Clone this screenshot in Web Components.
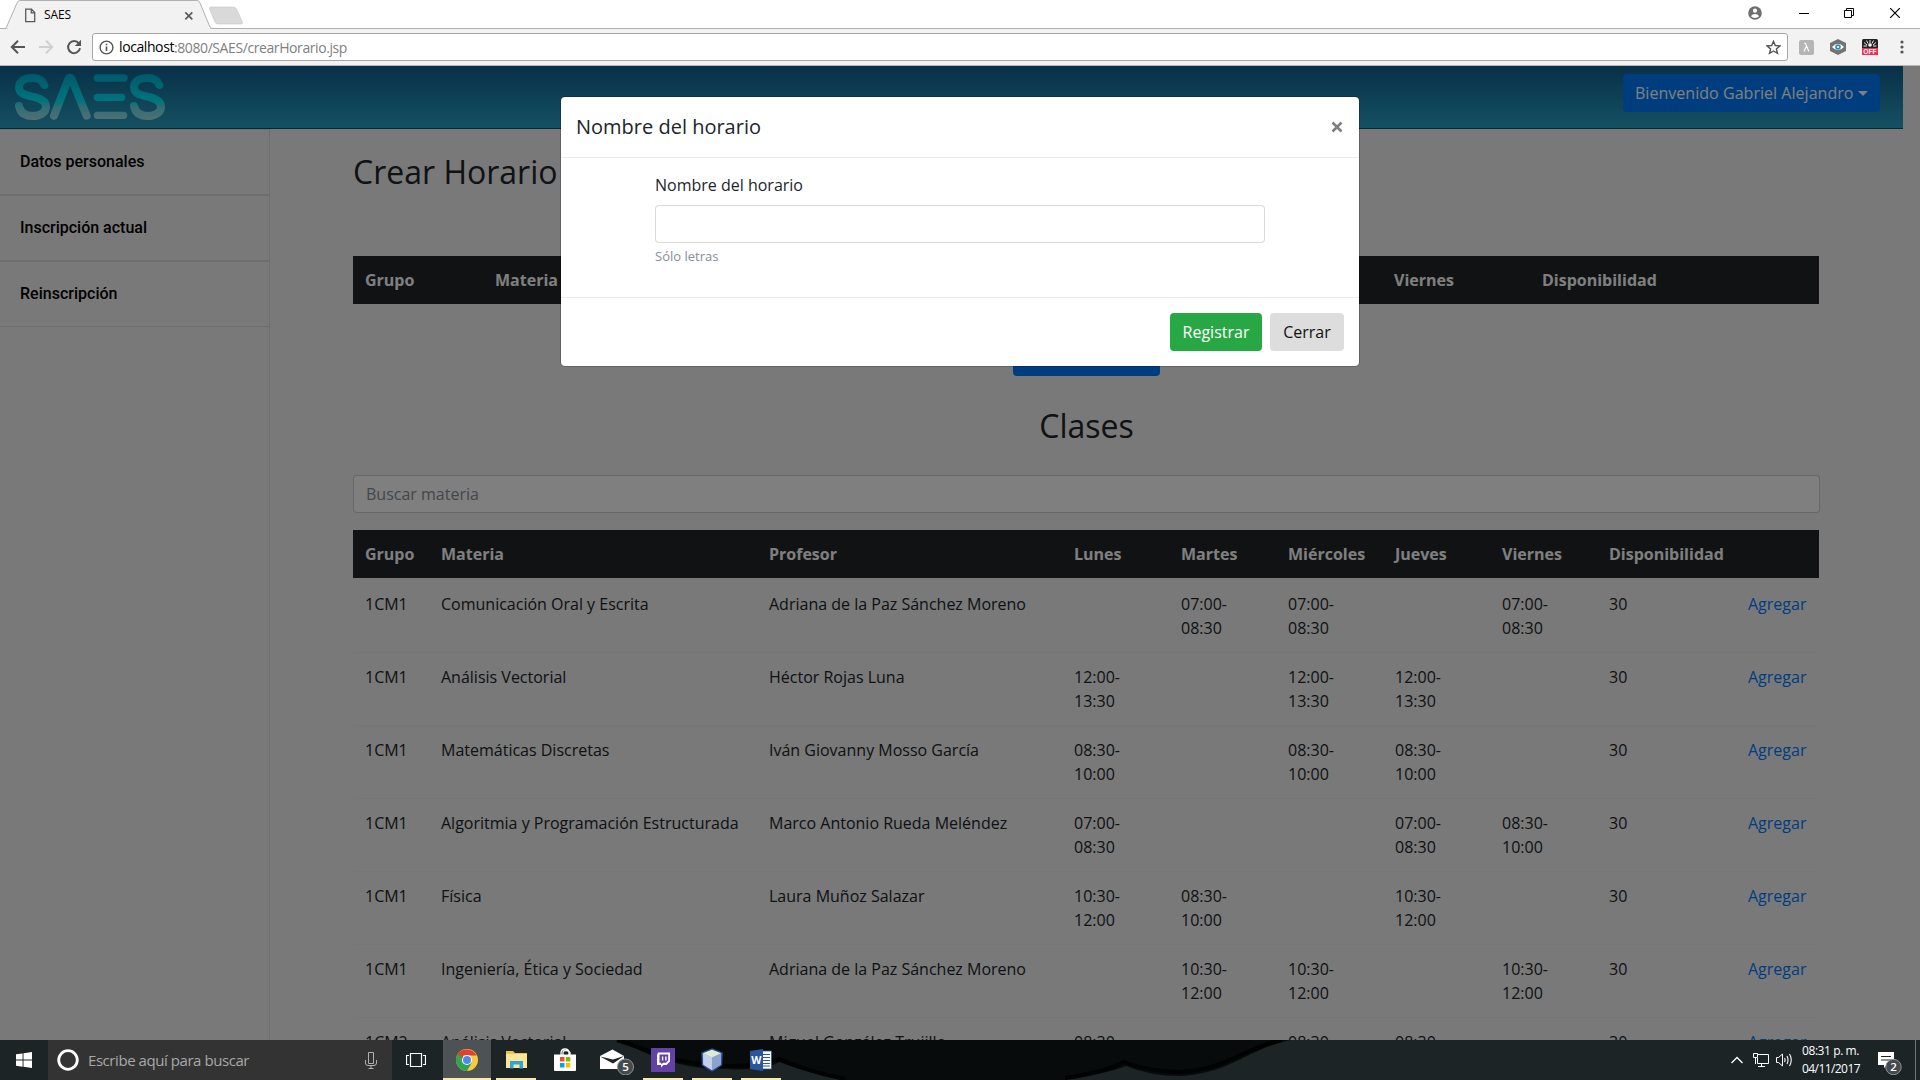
<!DOCTYPE html>
<html lang="es">
<head>
<meta charset="utf-8">
<title>SAES</title>
<style>
html,body{margin:0;padding:0;width:1920px;height:1080px;overflow:hidden;background:#fff}
body{display:flex;flex-direction:column;font-family:"Open Sans",sans-serif;font-size:16px;line-height:24px;color:#212529}
</style>
</head>
<body>
<browser-chrome url-host="localhost" url-path=":8080/SAES/crearHorario.jsp">SAES</browser-chrome>
<saes-page></saes-page>
<win-taskbar></win-taskbar>
<script>
function define(name, html, after){
  const t=document.createElement('template');
  t.innerHTML='<style>*{box-sizing:border-box}svg{display:block}</style>'+html;
  customElements.define(name, class extends HTMLElement{
    connectedCallback(){
      if(this.shadowRoot) return;
      this.attachShadow({mode:'open'}).appendChild(t.content.cloneNode(true));
      if(after) after(this,this.shadowRoot);
    }
  });
}

/* Text whose letter-spacing is tuned so the run has the width given in "w". */
define('fit-text','<style>:host{display:inline-block;white-space:pre}</style><span><slot></slot></span>',(el,root)=>{
  const s=root.querySelector('span'), w=parseFloat(el.getAttribute('w')), n=el.textContent.length;
  const fit=()=>{s.style.letterSpacing='0px';const d=(w-s.getBoundingClientRect().width)/n;s.style.letterSpacing=d+'px'};
  fit();
});

define('browser-chrome',`<style>
:host{display:flex;flex-direction:column;height:66px;flex:none;background:#fff;font-family:"Open Sans",sans-serif;color:#000}
.strip{height:29px;display:flex;justify-content:space-between;position:relative;border-bottom:1px solid #b0b0b0}
.tabbg{position:absolute;left:0;top:0}
.tab{display:flex;align-items:center;padding-left:24px;position:relative;height:29px;width:220px}
.tab fit-text{font-size:12px;line-height:16px;margin-left:8px;width:140px}
.win{display:flex;align-items:center;padding:0 20px 3px 0}
.bar{flex:1;background:#f2f2f2;display:flex;align-items:center;border-bottom:1px solid #b6b6b6;padding:0 15px 0 10px}
.url{margin-left:10px;width:1696px;height:28px;border:1px solid #a6a6a6;border-radius:3px;background:#fff;display:flex;align-items:center;padding:0 6px 0 6px}
.url fit-text{font-size:14px;line-height:20px}
.path{color:#808080;flex:1}
</style>
<div class="strip">
<svg class="tabbg" width="250" height="29"><path d="M0 28.5H5Q6.500 28 7 26L17 3Q18 .5 20 .5H197Q199 .5 200 3L209.500 26Q210.500 28.500 212 28.500" fill="#f2f2f2" stroke="#b0b0b0"/><path d="M8 28.500H210" stroke="#f2f2f2"/><path d="M210.500 7H233Q235.500 7 236.500 9L242.500 22Q243 24 241 24H218Q216 24 215 22L209.500 9Q209 7 210.500 7Z" fill="#d9d9d9" stroke="#c8c8c8" stroke-width=".6"/></svg>
<div class="tab"><svg width="12" height="15" viewBox="0 0 12 15" style="margin-top:1px"><path d="M1.700 1.200H7.500L10.700 4.500V13.600H1.700ZM7.300 1.200V4.800H10.700" fill="none" stroke="#5a5a5a" stroke-width="1.300"/></svg><fit-text w="27"><slot></slot></fit-text>
<svg width="10" height="10" viewBox="0 0 10 10" style="margin:2px 0 0 0"><path d="M1.300 1.300l7 7M8.300 1.300l-7 7" stroke="#5a5a5a" stroke-width="1.700"/></svg></div>
<div class="win">
<svg width="14" height="14" viewBox="0 0 14 14" style="margin-right:37px"><circle cx="7" cy="7" r="6.800" fill="#6e6e6e"/><circle cx="7" cy="4.700" r="2.100" fill="#fff"/><path d="M2.900 10.200Q4.300 8 7 8T11.100 10.200Q9.500 12 7 12T2.900 10.200Z" fill="#fff"/></svg>
<svg width="10" height="10" style="margin-right:35px"><path d="M0 5.500H10" stroke="#000"/></svg>
<svg width="10" height="10" style="margin-right:36px"><path d="M.5 2.500H7.500V9.500H.5ZM2.500 2.500V.5H9.500V7.500H7.500" fill="none" stroke="#000"/></svg>
<svg width="10" height="10"><path d="M0 0L10 10M10 0L0 10" stroke="#000" stroke-width="1.200"/></svg>
</div></div>
<div class="bar">
<svg width="16" height="16" viewBox="0 0 16 16"><path d="M15 8H2M8 1.800L1.800 8L8 14.200" fill="none" stroke="#555" stroke-width="2"/></svg>
<svg width="16" height="16" viewBox="0 0 16 16" style="margin-left:12px"><path d="M1 8H14M8 1.800L14.200 8L8 14.200" fill="none" stroke="#d0d0d0" stroke-width="2"/></svg>
<svg width="16" height="16" viewBox="0 0 16 16" style="margin-left:12px"><path d="M12.900 4.500A6 6 0 1 0 14 9.300" fill="none" stroke="#555" stroke-width="2"/><path d="M15 .8V7H8.800Z" fill="#555"/></svg>
<div class="url">
<svg width="15" height="15" viewBox="0 0 15 15" style="margin-right:5px"><circle cx="7.500" cy="7.500" r="6.400" fill="none" stroke="#555" stroke-width="1.400"/><path d="M7.500 6.500V11M7.500 3.800V5.300" stroke="#555" stroke-width="1.600"/></svg>
<fit-text class="host" w="55"></fit-text><div class="path"><fit-text w="173"></fit-text></div>
<svg width="15" height="15" viewBox="0 0 15 15"><path d="M7.500 1.300L9.300 5.500L13.900 5.900L10.400 8.900L11.500 13.400L7.500 11L3.500 13.400L4.600 8.900L1.100 5.900L5.700 5.500Z" fill="none" stroke="#555" stroke-width="1.400"/></svg></div>
<svg width="15" height="15" viewBox="0 0 15 15" style="margin-left:11px"><rect width="15" height="15" rx="2" fill="#b5b5b5"/><path d="M5.300 3.500Q6.500 3 7 4.500L9.800 11.500M7.200 6.500L5 11.500" stroke="#fff" fill="none" stroke-width="1.100"/></svg>
<svg width="18" height="18" viewBox="0 0 18 18" style="margin-left:15px"><path d="M9 1L17 5V13L9 17L1 13V5Z" fill="#737373"/><path d="M3 9Q9 2.500 15 9Q9 15.500 3 9Z" fill="#fff"/><circle cx="9" cy="9" r="2.800" fill="#2c8fb5"/><circle cx="9" cy="9" r="1.100" fill="#fff"/></svg>
<svg width="16" height="16" viewBox="0 0 16 16" style="margin-left:15px"><rect width="16" height="16" rx="1.500" fill="#222"/><path d="M0 9H16V14.500Q16 16 14.500 16H1.500Q0 16 0 14.500Z" fill="#ef2d56"/><path d="M8 1V4M4.500 1.500L6 4.500M11.500 1.500L10 4.500M2 3.500L5 6M14 3.500L11 6M1.500 7H5M11 7H14.500" stroke="#fff" stroke-width=".9"/><circle cx="8" cy="6" r="1.800" fill="#fff"/><text x="8" y="15.100" font-family="Liberation Sans" font-weight="bold" font-size="6.700" fill="#fff" text-anchor="middle">OFF</text></svg>
<svg width="4" height="14" viewBox="0 0 4 14" style="margin-left:22px"><circle cx="2" cy="2" r="1.600" fill="#555"/><circle cx="2" cy="7" r="1.600" fill="#555"/><circle cx="2" cy="12" r="1.600" fill="#555"/></svg>
</div>`,(el,r)=>{
  const f=r.querySelectorAll('.url fit-text');
  f[0].textContent=el.getAttribute('url-host');
  f[1].textContent=el.getAttribute('url-path');
  /* the slotted and attribute texts arrive late, so spacing is set again */
  const set=(e,n)=>{const s=e.shadowRoot.querySelector('span');s.style.letterSpacing='0px';s.style.letterSpacing=((+e.getAttribute('w')-s.getBoundingClientRect().width)/n)+'px'};
  set(f[0],9);set(f[1],f[1].textContent.length);
  set(r.querySelector('.tab fit-text'),4);
});

define('saes-logo',`<style>:host{display:block;width:152px;height:48px}</style>
<svg width="152" height="48" viewBox="42 219 456 144"><defs><linearGradient id="g" gradientUnits="userSpaceOnUse" x1="0" y1="222" x2="0" y2="360"><stop offset="0" stop-color="#00b2d0"/><stop offset=".58" stop-color="#00e8fa"/><stop offset=".72" stop-color="#60dce8"/><stop offset="1" stop-color="#a4e0e8"/></linearGradient></defs>
<g fill="none" stroke="url(#g)" stroke-width="24" stroke-linecap="round" stroke-linejoin="round"><path d="M133 255C128 241 115 234 97 234C72 234 57 245 57 262C57 281 76 285 98 290C121 295 138 302 138 320C138 338 120 348 98 348C76 348 61 338 57 318"/><path d="M162 347L204 240Q210 227 216 240L260 347"/><path d="M478 255C473 241 460 234 442 234C417 234 402 245 402 262C402 281 421 285 443 290C466 295 483 302 483 320C483 338 465 348 443 348C421 348 406 338 402 318"/><g stroke-width="22"><path d="M292 234.010L372 234M292 292.010L365 292M292 346.010L371 346"/></g></g></svg>`);

define('saes-header',`<style>
:host{display:flex;justify-content:space-between;height:63px;width:1903px;flex:none;background:linear-gradient(#10608f,#2aa2c4);border-bottom:1px solid #045080;padding:7px 23px 0 14px}
.btn{width:257px;height:38px;background:#007bff;border-radius:4px;color:#fff;display:flex;align-items:center;padding:0 12px;margin-top:1px}
i{border:5px solid transparent;border-top-color:#fff;border-bottom:0;margin-left:4px}
</style><saes-logo></saes-logo><div class="btn"><fit-text w="218.500">Bienvenido Gabriel Alejandro</fit-text><i></i></div>`);

define('nav-item',`<style>
:host{display:flex;align-items:center;height:66px;border:solid #dcdcdc;border-width:1px 0;padding:0 20px;font-family:Roboto,sans-serif;font-weight:500;font-size:16px;color:#000}
</style><fit-text><slot></slot></fit-text>`,(el,r)=>{
  const s=r.querySelector('fit-text').shadowRoot.querySelector('span');
  s.style.letterSpacing='0px';
  s.style.letterSpacing=((+el.getAttribute('w')-s.getBoundingClientRect().width)/el.textContent.length)+'px';
});

define('side-nav',`<style>:host{display:block;width:270px;flex:none;border-right:1px solid #dcdcdc}</style><slot></slot>`);

/* cols: column widths; rows are "|" separated, times written start-end */
define('class-table',`<style>
:host{display:block;width:1466px}
.r{display:grid;border-top:1px solid #eaeded}
.r.h{background:#212529;color:#fff;font-weight:700;border:0}
.c{padding:12px;white-space:pre-line;min-width:0}
.h .c{white-space:nowrap}
.gap{height:1px}
.a{color:#007bff}
</style><div id="t"></div>`,(el,r)=>{
  const t=r.getElementById('t'),cols=el.getAttribute('cols');
  const row=(txt,head)=>{
    const d=document.createElement('div');d.className='r'+(head?' h':'');d.style.gridTemplateColumns=cols;
    txt.split('|').forEach(x=>{const c=document.createElement('div');c.className='c'+(x==='Agregar'?' a':'');c.textContent=x.replace(/^(\d\d:\d\d-)/,'$1\n');d.appendChild(c)});
    t.appendChild(d);
  };
  row(el.getAttribute('head'),true);
  const g=document.createElement('div');g.className='gap';t.appendChild(g);
  (el.getAttribute('rows')||'').split(';').filter(Boolean).forEach(x=>row(x));
});

define('text-field',`<style>
:host{display:flex;align-items:center;height:38px;border:1px solid rgba(0,0,0,.15);border-radius:4px;background:#fff;background-clip:padding-box;padding:0 12px;color:#868e96}
</style><slot></slot>`);

define('name-modal',`<style>
:host{position:absolute;inset:0;background:rgba(0,0,0,.5);display:flex;justify-content:center;align-items:flex-start;padding:30px 0 0}
.m{width:800px;border:1px solid rgba(0,0,0,.2);border-radius:5px;background:#fff;background-clip:padding-box}
.hd{display:flex;justify-content:space-between;height:61px;padding:15px;border-bottom:1px solid #e9ecef;font-size:20px;line-height:30px}
.hd svg{margin:9px 1px 0 0}
.bd{padding:15px 94px 0;height:139px}
.bd text-field{margin-top:8px}
.bd small{display:block;font-size:13px;line-height:18px;margin-top:4px;color:#868e96}
.ft{border-top:1px solid #e9ecef;display:flex;justify-content:flex-end;gap:8px;padding:15px}
.b{height:38px;border-radius:4px;display:flex;align-items:center;justify-content:center;background:#28a745;color:#fff;width:92px}
.g{background:#ddd;color:#111;width:74px}
</style><div class="m"><div class="hd"><span>Nombre del horario</span><svg width="12" height="12"><path d="M1.500 1.500L10.500 10.500M10.500 1.500L1.500 10.500" stroke="#7f7f7f" stroke-width="2.600"/></svg></div>
<div class="bd"><div>Nombre del horario</div><text-field></text-field><small>Sólo letras</small></div>
<div class="ft"><div class="b">Registrar</div><div class="b g">Cerrar</div></div></div>`);

define('saes-page',`<style>
:host{display:flex;flex-direction:column;height:974px;flex:none;position:relative;overflow:hidden;background:#f2f2f2}
.body{display:flex;flex:1;width:1903px}
main{flex:1;padding:25px 83px 0 83px}
h2{font-weight:400;font-size:32px;line-height:35px;margin:0}
.c{text-align:center;margin-top:32px;height:67px}
.create{width:147px;height:38px;border-radius:4px;background:#007bff;margin:34px 0 0 660px}
.first{margin-top:67px;height:48px;overflow:hidden}
.second{margin-top:17px}
</style>
<saes-header></saes-header>
<div class="body"><side-nav><nav-item w="124.500">Datos personales</nav-item><nav-item w="127">Inscripción actual</nav-item><nav-item w="97.500">Reinscripción</nav-item></side-nav>
<main><h2>Crear Horario</h2>
<class-table class="first" cols="130px 899px 148px 289px" head="Grupo|Materia|Viernes|Disponibilidad"></class-table>
<div class="create"></div>
<h2 class="c">Clases</h2>
<text-field>Buscar materia</text-field>
<class-table class="second" cols="76px 328px 305px 107px 107px 107px 107px 107px 139px 83px"
head="Grupo|Materia|Profesor|Lunes|Martes|Miércoles|Jueves|Viernes|Disponibilidad|"
rows="1CM1|Comunicación Oral y Escrita|Adriana de la Paz Sánchez Moreno||07:00-08:30|07:00-08:30||07:00-08:30|30|Agregar;1CM1|Análisis Vectorial|Héctor Rojas Luna|12:00-13:30||12:00-13:30|12:00-13:30||30|Agregar;1CM1|Matemáticas Discretas|Iván Giovanny Mosso García|08:30-10:00||08:30-10:00|08:30-10:00||30|Agregar;1CM1|Algoritmia y Programación Estructurada|Marco Antonio Rueda Meléndez|07:00-08:30|||07:00-08:30|08:30-10:00|30|Agregar;1CM1|Física|Laura Muñoz Salazar|10:30-12:00|08:30-10:00||10:30-12:00||30|Agregar;1CM1|Ingeniería, Ética y Sociedad|Adriana de la Paz Sánchez Moreno||10:30-12:00|10:30-12:00||10:30-12:00|30|Agregar;1CM2|Análisis Vectorial|Miguel González Trujillo|08:30||08:30|08:30||30|Agregar"></class-table>
</main></div><name-modal></name-modal>`);

define('task-icon',`<style>
:host{display:flex;width:48px;height:40px;margin-right:1px;flex:none;align-items:center;justify-content:center;position:relative}
:host([active]){background:#4d5354}
:host([open])::after{content:"";position:absolute;left:4px;right:4px;bottom:0;height:2px;background:#ffe8a6}
:host([active])::after{left:0;right:0}
</style><slot></slot>`);

define('win-taskbar',`<style>
:host{display:flex;align-items:center;height:40px;position:relative;background:#1c2426;color:#fff;font-family:"Open Sans",sans-serif;overflow:hidden}
.wall{position:absolute;left:0;top:0}
.start{width:48px;display:flex;justify-content:center;position:relative}
.search{width:344px;height:40px;background:#333;display:flex;align-items:center;padding:0 15px 0 9px;color:#a8a8a8;font-size:15px;line-height:20px;position:relative}
.search fit-text{flex:1;margin-left:9px}
.tray{margin-left:auto;display:flex;align-items:center;position:relative;padding-right:4px}
.clock{display:flex;flex-direction:column;align-items:flex-start;font-size:12px;line-height:18px;margin:0 18px 0 9px}
.line{width:1px;height:40px;background:#707677;margin-left:12px}
</style>
<svg class="wall" width="1920" height="40"><path d="M617 0C640 10 670 28 720 29C750 30 765 30 779 22C800 30 820 35 845 40H1065Q1105 34 1126 26Q1150 36 1180 36C1230 34 1250 8 1290 0Z" fill="#070b0c"/><path d="M617 0C650 10 670 22 710 25C740 27 765 26 779 19C800 28 820 34 845 39M1065 38Q1105 32 1124 22Q1150 32 1180 32C1225 30 1245 8 1282 0" fill="none" stroke="#010202" stroke-width="4"/></svg>
<div class="start"><svg width="16" height="16"><path d="M0 2.300L6.600 1.400V7.500H0ZM7.500 1.200L16 0V7.500H7.500ZM0 8.500H6.600V14.700L0 13.800ZM7.500 8.500H16V16L7.500 14.800Z" fill="#fff"/></svg></div>
<div class="search"><svg width="22" height="22"><circle cx="11" cy="11" r="9.300" fill="none" stroke="#fff" stroke-width="2.800"/></svg><fit-text w="161">Escribe aquí para buscar</fit-text>
<svg width="12" height="17"><path d="M3.500.5H8.500V11.500H3.500ZM.5 8V11Q.5 13.500 3 13.500H9Q11.500 13.500 11.500 11V8M6 13.500V16M3.500 16.500H8.500" fill="none" stroke="#b0b0b0"/></svg></div>
<task-icon style="margin-right:3px"><svg width="20" height="16"><path d="M4.500 1.500H15.500V14.500H4.500ZM3 3.500H.5V12.500H3M17 3.500H19.500V12.500H17" fill="none" stroke="#fff" stroke-width="1.200"/></svg></task-icon>
<task-icon active open><svg width="22" height="22" viewBox="0 0 48 48"><circle cx="24" cy="24" r="24" fill="#f7cb3b"/><path d="M3.200 12A24 24 0 0 0 24 48L34.500 30L24 24L13.500 30Z" fill="#32a350"/><path d="M3.200 12L13.600 29L16 14H44.800A24 24 0 0 0 3.200 12Z" fill="#e0402f"/><path d="M3.200 12L13.600 30L20 20Z" fill="#32a350"/><circle cx="24" cy="24" r="11" fill="#fff"/><circle cx="24" cy="24" r="8.800" fill="#4a8af4"/></svg></task-icon>
<task-icon open><svg width="23" height="20"><path d="M1 1H8L10 3H22V18H1Z" fill="#f2c14a"/><path d="M1 4H22V18H1Z" fill="#ffe596"/><path d="M5 11H18V18.500H14.500V14.500H8.500V18.500H5Z" fill="#2da4e0"/></svg></task-icon>
<task-icon><svg width="24" height="24"><path d="M8 7V5Q8 1 12 1T16 5V7M10 7V4Q10 2.500 13 2.500T17 4.500V7" fill="none" stroke="#fff" stroke-width="1.300"/><path d="M1 6.500H23V22Q23 23 22 23H2Q1 23 1 22Z" fill="#fff"/><path d="M7 9H11.500V13.500H7Z" fill="#f25022"/><path d="M12.800 9H17.300V13.500H12.800Z" fill="#7fba00"/><path d="M7 15H11.500V19.500H7Z" fill="#00a4ef"/><path d="M12.800 15H17.300V19.500H12.800Z" fill="#ffb900"/></svg></task-icon>
<task-icon><svg width="36" height="30" style="margin-left:8px"><path d="M0 11L12.500 4.500L24 11V24H0Z" fill="#fff"/><path d="M0 11.500L13 14.500L24 11L13 18.500Z" fill="#1c2426"/><circle cx="25.500" cy="22" r="8" fill="#454b4d" stroke="#8f9495"/><text x="25.500" y="26" text-anchor="middle" font-family="Open Sans" font-weight="600" font-size="11.500" fill="#fff">5</text></svg></task-icon>
<task-icon open><svg width="24" height="24"><rect width="24" height="24" fill="#6441a4"/><path d="M7 4.500H19V13.500L15.500 17H12.500L10 19.500V17H6V7Z" fill="#fff"/><path d="M8.500 6.500H17.200V12.500L15 14.700H12L10.300 16.400V14.700H8.500Z" fill="#6441a4"/><path d="M11.600 8.500V12.500M14.900 8.500V12.500" stroke="#fff" stroke-width="1.400"/></svg></task-icon>
<task-icon open><svg width="24" height="24"><path d="M12 1L22 5L21.500 17L12 23L2.500 17L2 5Z" fill="#9db4d8" stroke="#324a90" stroke-width="1.400"/><path d="M12 1.800L21 5.300L12 9.500L3 5.300Z" fill="#dcebd6"/><path d="M3 5.500L12 9.500V22L3.300 16.500Z" fill="#c3d0ea"/><path d="M21 5.500L12 9.500V22L20.800 16.500Z" fill="#8ba3cf"/></svg></task-icon>
<task-icon open><svg width="24" height="24"><path d="M12 3H22.500V21H12Z" fill="#fff" stroke="#2b579a" stroke-width=".8"/><path d="M14 6.500H21M14 9.500H21M14 12.500H21M14 15.500H21M14 18H21" stroke="#2b579a"/><path d="M1 3L14 1V23L1 21Z" fill="#2b579a"/><text x="7.400" y="16" text-anchor="middle" font-family="Open Sans" font-weight="700" font-size="10.500" fill="#fff">W</text></svg></task-icon>
<div class="tray">
<svg width="12" height="8" style="margin-right:10px"><path d="M.5 7L6 1.500L11.500 7" fill="none" stroke="#fff" stroke-width="1.300"/></svg>
<svg width="16" height="14"><path d="M4 1.500H15.500V10.500H4.500V5M.5.500H4.500V4.500H.5ZM2.500 4.500V11M8.500 10.500V13M5 13.500H12" fill="none" stroke="#fff"/></svg>
<svg width="17" height="14" style="margin-left:7px"><path d="M.5 4.500H2.500L6.500 1V13L2.500 9.500H.5Z" fill="none" stroke="#fff"/><path d="M8.500 5Q9.700 7 8.500 9M11 3Q13 7 11 11M13.500 1Q17 7 13.500 13" fill="none" stroke="#fff" stroke-width="1.100"/></svg>
<div class="clock"><fit-text w="57">08:31 p. m.</fit-text><fit-text w="58">04/11/2017</fit-text></div>
<svg width="25" height="30"><path d="M0 7H16V20H9L6 23V20H0Z" fill="#fff"/><path d="M3 11.500H13M3 15H13" stroke="#1c2426" stroke-width="1.200"/><circle cx="15.500" cy="22" r="7.700" fill="#454b4d" stroke="#8f9495"/><text x="15.500" y="26" text-anchor="middle" font-family="Open Sans" font-weight="600" font-size="11.500" fill="#fff">2</text></svg>
<div class="line"></div></div>`);
</script>
</body>
</html>
